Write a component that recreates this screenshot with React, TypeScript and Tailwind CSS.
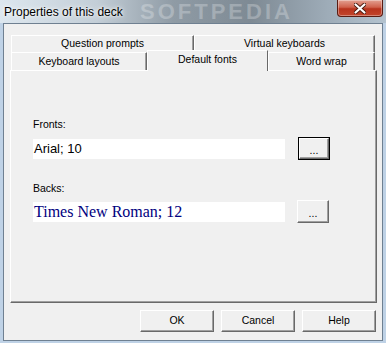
import React from "react";

const ui = "font-['Liberation_Sans',Arial,sans-serif]";

function Tab({ label, className = "" }: { label: string; className?: string }) {
  return (
    <div
      className={`flex items-center justify-center border-l border-t border-r border-l-white border-t-white border-r-[#696969] shadow-[inset_-1px_0_0_#a0a0a0] bg-[#f0f0f0] text-[10.5px] text-black ${className}`}
    >
      {label}
    </div>
  );
}

function DotsButton({ focused }: { focused?: boolean }) {
  return (
    <div className={`w-[32px] h-[23px] ${focused ? "border border-black" : ""}`}>
      <div className="w-full h-full flex items-center justify-center border border-l-white border-t-white border-r-[#696969] border-b-[#696969] shadow-[inset_-1px_-1px_0_#a0a0a0] bg-[#f0f0f0] text-[10.5px] leading-none pt-[3px]">
        ...
      </div>
    </div>
  );
}

function DialogButton({ label }: { label: string }) {
  return (
    <div className="w-[74px] h-[22px] flex items-center justify-center border border-l-white border-t-white border-r-[#696969] border-b-[#696969] shadow-[inset_-1px_-1px_0_#a0a0a0] bg-[#f0f0f0] text-[10.5px] text-black">
      {label}
    </div>
  );
}

export default function App() {
  return (
    <div className={`w-[386px] h-[343px] flex flex-col overflow-hidden bg-[#bfd2e6] ${ui}`}>
      {/* title bar */}
      <div className="relative h-[23px] flex justify-between bg-[linear-gradient(90deg,#dde7ef_0%,#c3ced7_25%,#8f9ba5_45%,#7e8a94_65%,#9eacb8_85%,#b4c3cf_100%)]">
        <span className="pointer-events-none absolute left-[140px] top-0 leading-[23px] text-[22px] font-bold tracking-[3px] text-white/25">
          SOFTPEDIA
        </span>
        <span className="relative pl-[4px] pt-[3px] text-[12px] text-black [text-shadow:0_0_6px_#fff,0_0_3px_#fff]">
          Properties of this deck
        </span>
        <div className="relative mr-[3px] w-[46px] h-[17px] rounded-b-[4px] border border-t-0 border-[#5a1c12] bg-[linear-gradient(180deg,#e3a192_0%,#d0614c_45%,#b8331d_55%,#c2452c_100%)] shadow-[inset_0_0_0_1px_rgba(255,255,255,0.35)] flex items-center justify-center">
          <svg width="12" height="11" viewBox="0 0 12 11">
            <path d="M1.5 1.5 L10.5 9.5 M10.5 1.5 L1.5 9.5" stroke="#4a1a10" strokeWidth="4" strokeLinecap="round" />
            <path d="M1.5 1.5 L10.5 9.5 M10.5 1.5 L1.5 9.5" stroke="#fff" strokeWidth="2.2" strokeLinecap="round" />
          </svg>
        </div>
      </div>

      {/* client area */}
      <div className="mx-[3px] h-[318px] border border-[#6f8091] bg-[#f0f0f0] flex flex-col pl-[6px] pt-[11px]">
        {/* tabs */}
        <div className="flex ml-[1px] h-[17px]">
          <Tab label="Question prompts" className="w-[183px] h-[17px] pb-[1px]" />
          <Tab label="Virtual keyboards" className="w-[181px] h-[17px] pb-[1px]" />
        </div>
        <div className="flex items-end ml-[1px] h-[18px]">
          <Tab label="Keyboard layouts" className="w-[136px] h-[18px] pt-[1px]" />
          <Tab label="Default fonts" className="relative z-10 w-[121px] h-[21px] -mb-[1px] shadow-none pb-[3px]" />
          <Tab label="Word wrap" className="w-[107px] h-[18px] pt-[1px]" />
        </div>

        {/* panel */}
        <div className="w-[367px] h-[233px] border border-l-white border-t-white border-r-[#696969] border-b-[#696969] shadow-[inset_-1px_-1px_0_#a0a0a0] flex flex-col pl-[22px] pt-[47px]">
          <div className="h-[13px] text-[10.5px] leading-[13px] text-black">Fronts:</div>
          <div className="mt-[6px] flex items-center h-[23px]">
            <div className="w-[252px] h-[20px] bg-white pl-[1px] flex items-center text-[13px] text-black">
              Arial; 10
            </div>
            <div className="ml-[13px]">
              <DotsButton focused />
            </div>
          </div>
          <div className="mt-[22px] h-[13px] text-[10.5px] leading-[13px] text-black">Backs:</div>
          <div className="mt-[5px] flex items-center h-[23px]">
            <div className="w-[252px] h-[20px] bg-white pl-[1px] flex items-center text-[16px] text-[#000080] font-['Liberation_Serif','Times_New_Roman',serif]">
              Times New Roman; 12
            </div>
            <div className="ml-[12px]">
              <DotsButton />
            </div>
          </div>
        </div>

        {/* bottom buttons */}
        <div className="mt-[7px] flex gap-[7px] pl-[130px]">
          <DialogButton label="OK" />
          <DialogButton label="Cancel" />
          <DialogButton label="Help" />
        </div>
      </div>
    </div>
  );
}
